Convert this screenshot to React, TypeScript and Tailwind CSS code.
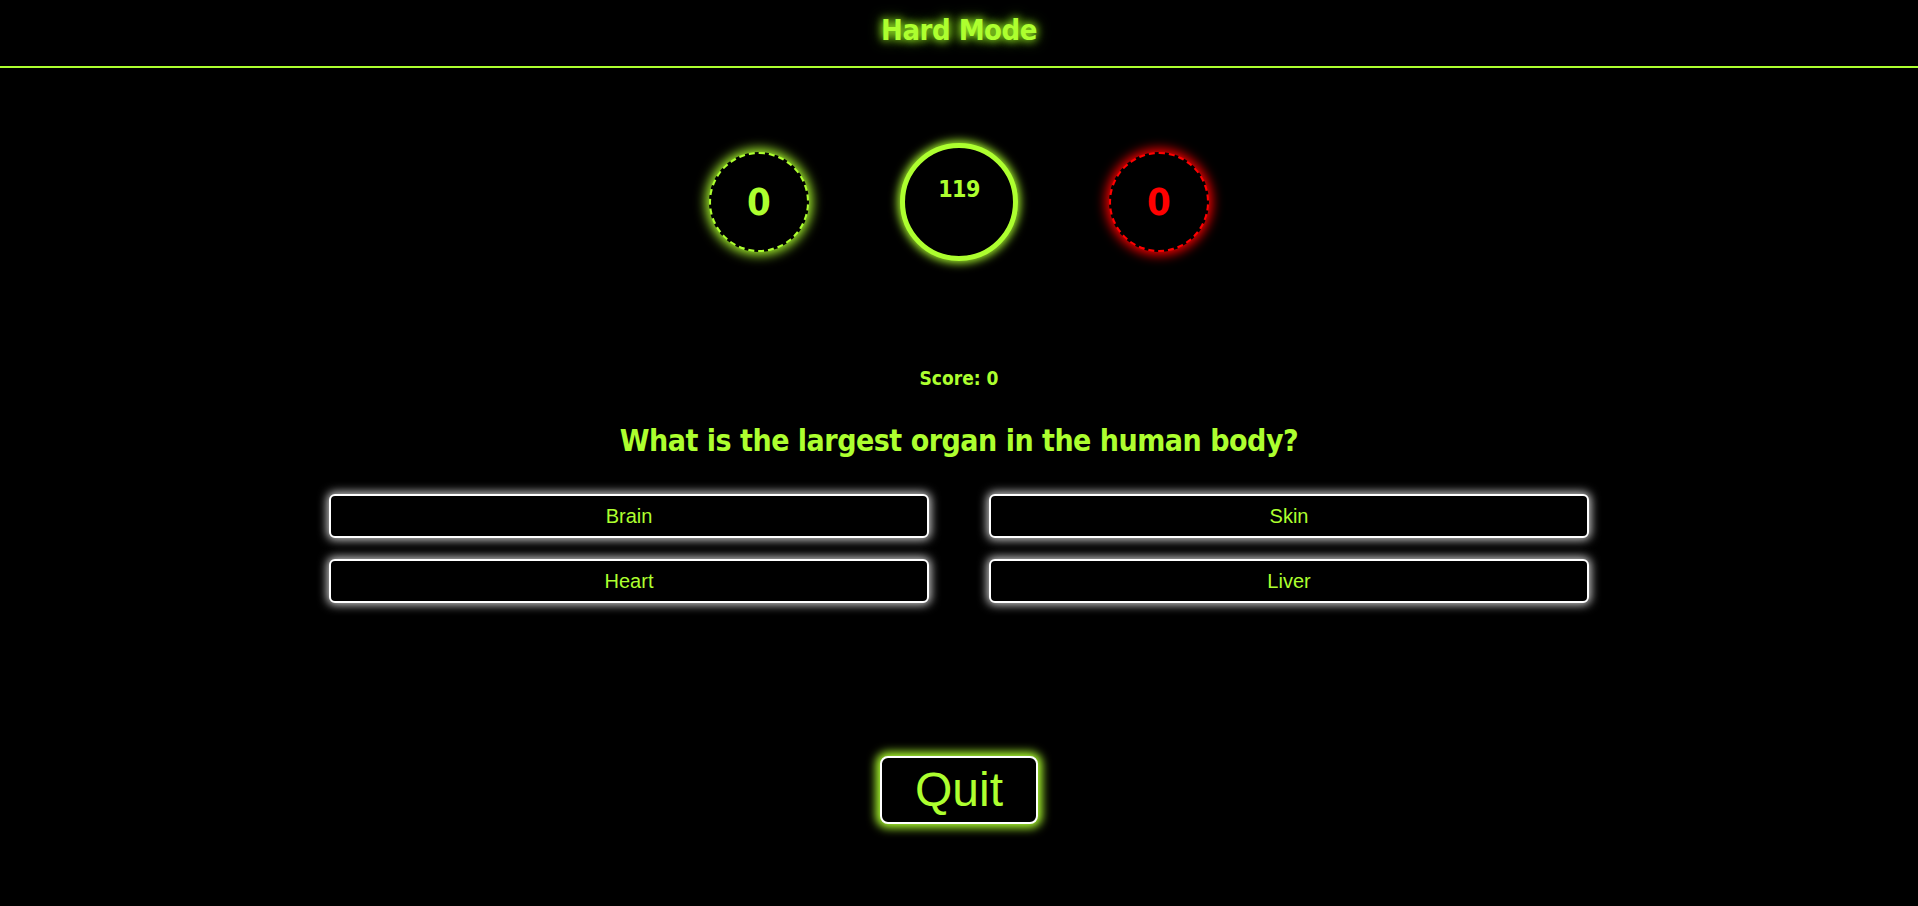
import React from "react";

const display = "font-['Liberation_Sans_Narrow','DejaVu_Sans_Condensed',sans-serif] font-bold";

const answers = ["Brain", "Skin", "Heart", "Liver"];

const Counter: React.FC<{ value: number; tone: "good" | "bad" }> = ({ value, tone }) => {
  const ring =
    tone === "good"
      ? "border-[#adff2f] text-[#adff2f] shadow-[0_0_12px_3px_#adff2f]"
      : "border-[#ff0000] text-[#ff0000] shadow-[0_0_12px_3px_#ff0000]";
  return (
    <div
      className={`w-[100px] h-[100px] rounded-full border-2 border-dashed bg-black flex items-center justify-center text-[38px] ${display} ${ring}`}
    >
      {value}
    </div>
  );
};

export default function App() {
  return (
    <div className="min-h-[906px] bg-black text-[#adff2f]">
      <header className="h-[68px] border-b-2 border-[#adff2f] flex items-center justify-center pb-[4px]">
        <h1 className={`text-[29px] tracking-[-0.5px] ${display} [text-shadow:0_0_8px_#adff2f,0_0_14px_#5fbf00]`}>
          Hard Mode
        </h1>
      </header>

      <main className="flex flex-col items-center">
        <div className="mt-[75px] flex flex-row items-center gap-[91px]">
          <Counter value={0} tone="good" />
          <div className="w-[118px] h-[118px] rounded-full border-[5px] border-[#adff2f] bg-black shadow-[0_0_10px_2px_#adff2f] flex justify-center pt-[30px]">
            <span className={`text-[23px] leading-none tracking-[-0.5px] ${display}`}>119</span>
          </div>
          <Counter value={0} tone="bad" />
        </div>

        <p className={`mt-[105px] text-[19px] leading-[24px] ${display}`}>Score: 0</p>

        <h2 className={`mt-[31px] text-[30px] leading-[40px] tracking-[-0.5px] ${display}`}>
          What is the largest organ in the human body?
        </h2>

        <div className="mt-[33px] grid grid-cols-2 gap-x-[60px] gap-y-[21px]">
          {answers.map((a) => (
            <button
              key={a}
              className="w-[600px] h-[44px] rounded-[6px] border-2 border-white bg-black shadow-[0_0_10px_2px_rgba(255,255,255,0.8)] text-[20px] text-[#adff2f] font-['Liberation_Sans',Arial,sans-serif]"
            >
              {a}
            </button>
          ))}
        </div>

        <button className="mt-[153px] w-[158px] h-[68px] rounded-[8px] border-2 border-white bg-black shadow-[0_0_10px_4px_#adff2f] text-[48px] leading-none text-[#adff2f] font-['Liberation_Sans',Arial,sans-serif]">
          Quit
        </button>
      </main>
    </div>
  );
}
